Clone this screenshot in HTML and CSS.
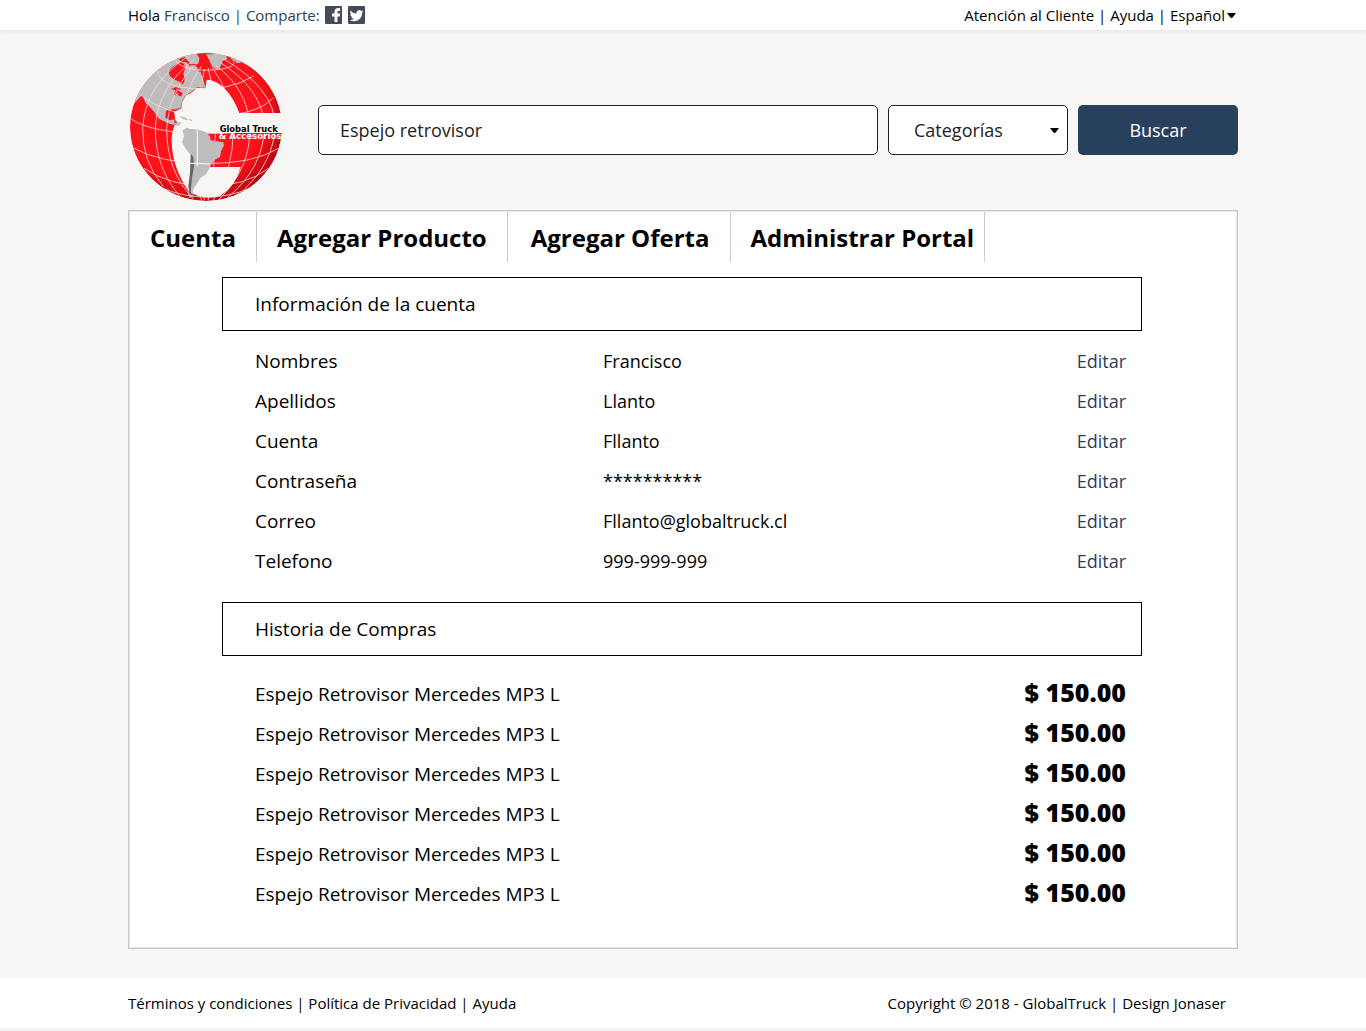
FILE: index.html
```html
<!DOCTYPE html>
<html lang="es">
<head>
<meta charset="utf-8">
<meta name="viewport" content="width=device-width, initial-scale=1">
<title>GlobalTruck - Cuenta</title>
<link rel="stylesheet" href="styles.css">
</head>
<body>
<div class="topbar">
  <div class="container topbar-inner">
    <div class="greeting">
      <span>Hola <a class="accent" href="#">Francisco</a> <span class="accent">| Comparte:</span></span>
      <a class="social" href="#" aria-label="Facebook">
        <svg viewBox="0 0 18 18" width="18" height="18"><rect width="17" height="18" rx="1" fill="#454b57"/><path fill="#fff" d="M9.500 16v-5.500H7v-3h2.500V6c0-2.600 1.400-4 3.800-4 .8 0 1.400.1 1.800.2v2.700h-1.300c-1.100 0-1.300.6-1.300 1.500v1.100h2.700l-.4 3h-2.300V16z"/></svg>
      </a>
      <a class="social" href="#" aria-label="Twitter">
        <svg viewBox="0 0 18 18" width="18" height="18"><rect width="17" height="18" rx="1" fill="#454b57"/><path fill="#fff" d="M15.500 5.200c-.5.200-1 .4-1.600.5.600-.4 1-.9 1.200-1.500-.5.300-1.100.5-1.800.7a2.900 2.900 0 0 0-4.900 2.600C6 7.400 4 6.300 2.600 4.500c-.8 1.400-.3 3 .9 3.800-.5 0-.9-.1-1.300-.4 0 1.400 1 2.500 2.300 2.800-.4.100-.9.100-1.300 0 .4 1.200 1.400 2 2.700 2-1.200 1-2.700 1.400-4.300 1.200 4.900 3 12.500.5 12.500-7.200.6-.4 1-.9 1.400-1.500z"/></svg>
      </a>
    </div>
    <div class="toplinks">
      <a href="#">Atención al Cliente</a> | <a href="#">Ayuda</a> | <button class="language" type="button">Español<svg viewBox="0 0 9 5" width="9" height="5"><path d="M0 0h9L6 4Q4.500 6 3 4z"/></svg></button>
    </div>
  </div>
</div>

<header class="container header">
  <a class="logo" href="#" aria-label="Global Truck &amp; Accesorios">
    <svg viewBox="24 15 468 462" width="156" height="154">
      <defs>
        <radialGradient id="shade" cx="42%" cy="40%" r="62%">
          <stop offset="0.750" stop-color="#fe131c"/><stop offset="1" stop-color="#b70710"/>
        </radialGradient>
        <clipPath id="ball"><ellipse cx="258" cy="246" rx="228" ry="222"/></clipPath>
      </defs>
      <g clip-path="url(#ball)">
        <ellipse cx="258" cy="246" rx="228" ry="222" fill="url(#shade)"/>
        <path fill="#bebcbd" d="M30 190L55 130 110 60 180 24 232 26 240 55 242 80 250 104 256 128 232 126 215 140 198 150 186 170 182 188 164 194 138 198 136 218 150 225 162 222 165 240 148 236 118 222 98 196 78 176 66 150z"/>
        <path fill="#fe131c" d="M166 60l16-8 10 4 4 14-6 16 4 16-2 12-6 4-8-8-14-6-14-10-4-12 6-12zM176 42l18-6 8 10 10 12 22-2-10-16 8-14 28 2-4 32-6 20-16 0-2-14-14-6-10 2-8-10-16-2z"/>
        <path fill="#fe131c" d="M154 132l14-6 16 6-12 4 16 8-4 10-8-2-4-10-6 10-4-2 4-14zM66 176l16 2 20 24 12 20-8-2-18-22zM140 196l24-4-2 30-12 4-12-10z"/>
        <path fill="#bebcbd" d="M204 34l26-8 8 14-2 14-12 4-12-8-10-4zM258 28l58-2 6 16-14 6-8 20-10 6-14-10-10-22zM334 38l20 4 10 12-14 0z"/>
        <g fill="none" stroke="#fbdcdc" stroke-width="3" opacity=".8">
          <path d="M164 42Q180 76 260 76Q334 74 342 56Q344 46 330 38"/>
          <path d="M112 78Q118 120 210 130Q330 140 402 92"/>
          <path d="M62 150Q135 208 250 214Q410 215 460 158"/>
          <path d="M34 222Q92 264 260 266Q420 266 482 222"/>
          <path d="M38 308Q120 354 260 356Q400 356 476 310"/>
          <path d="M72 370Q150 422 260 424Q376 424 446 370M130 430Q190 456 260 456Q330 456 388 430"/>
          <path d="M206 32Q74 120 68 250Q66 350 130 424"/>
          <path d="M222 44Q110 130 106 250Q106 370 180 454"/>
          <path d="M232 54Q150 130 140 250Q140 380 220 462"/>
          <path d="M244 64Q188 140 182 250Q182 370 246 466M254 72Q234 150 232 250V370Q240 430 254 466"/>
          <path d="M264 68Q284 140 286 250Q286 380 264 466"/>
          <path d="M276 66Q336 150 340 250Q340 380 280 466"/>
          <path d="M288 62Q380 130 390 240Q394 370 296 464"/>
          <path d="M300 52Q424 130 434 240Q432 370 320 460M308 40Q462 130 466 240Q462 350 370 436"/>
        </g>
      </g>
      <path fill="#f7f6f4" d="M490 204H358C338 148 302 106 260 104L256 130 232 128 216 142 198 152 186 172 184 190 172 196 162 200 166 226 176 236 164 240Q154 262 155 290C156 350 180 400 206 440Q256 468 300 452C330 436 350 406 362 366H240V264H490z"/>
      <path fill="#bebcbd" d="M188 256l12-8 12 4 26 2 20 8 12 12 2 12 38 6 2 10-8 14-4 20-16 8-12 18-14 26-18 12-8 14-10 14-4 12 4 8-8-2-6-14 4-30 4-50-2-20-16-20-12-20 6-18zM204 440l20 14-16 4z"/>
      <path fill="#64666a" d="M212 326l8 10 2 28-6 36-4 40 6 12-10-6-3-22 5-40z"/>
      <path fill="none" stroke="#fff" stroke-width="3" d="M232 256V364M184 354L270 357"/>
      <path fill="#bebcbd" d="M164 234l20-2-4 8-12 2zM176 212l22 6 6 8-14-3zM202 222l16 2-4 4zM232 98l22 24-8 6z"/>
      <text class="logo-name" x="299" y="261" font-size="25">Global Truck</text>
      <text class="logo-sub" x="296" y="281" font-size="26">&amp; Accesorios</text>
    </svg>
  </a>
  <form class="search">
    <input class="search-text" type="text" value="Espejo retrovisor" aria-label="Buscar producto">
    <div class="select-wrap">
      <select class="search-category" aria-label="Categorías"><option>Categorías</option></select>
      <svg class="select-arrow" viewBox="0 0 9 5" width="9" height="5"><path d="M0 0h9L6 4Q4.500 6 3 4z"/></svg>
    </div>
    <button class="search-button" type="button">Buscar</button>
  </form>
</header>

<main class="container panel">
  <nav class="tabs">
    <a href="#">Cuenta</a><a href="#">Agregar Producto</a><a class="tab-wide" href="#">Agregar Oferta</a><a class="tab-last" href="#">Administrar Portal</a>
  </nav>
  <section class="block">
    <h2>Información de la cuenta</h2>
    <table class="account">
      <tr><th scope="row">Nombres</th><td>Francisco</td><td class="end"><a href="#">Editar</a></td></tr>
      <tr><th scope="row">Apellidos</th><td>Llanto</td><td class="end"><a href="#">Editar</a></td></tr>
      <tr><th scope="row">Cuenta</th><td>Fllanto</td><td class="end"><a href="#">Editar</a></td></tr>
      <tr><th scope="row">Contraseña</th><td>**********</td><td class="end"><a href="#">Editar</a></td></tr>
      <tr><th scope="row">Correo</th><td>Fllanto@globaltruck.cl</td><td class="end"><a href="#">Editar</a></td></tr>
      <tr><th scope="row">Telefono</th><td>999-999-999</td><td class="end"><a href="#">Editar</a></td></tr>
    </table>
  </section>
  <section class="block">
    <h2>Historia de Compras</h2>
    <table class="history">
      <tr><th scope="row">Espejo Retrovisor Mercedes MP3 L</th><td class="end price">$ 150.00</td></tr>
      <tr><th scope="row">Espejo Retrovisor Mercedes MP3 L</th><td class="end price">$ 150.00</td></tr>
      <tr><th scope="row">Espejo Retrovisor Mercedes MP3 L</th><td class="end price">$ 150.00</td></tr>
      <tr><th scope="row">Espejo Retrovisor Mercedes MP3 L</th><td class="end price">$ 150.00</td></tr>
      <tr><th scope="row">Espejo Retrovisor Mercedes MP3 L</th><td class="end price">$ 150.00</td></tr>
      <tr><th scope="row">Espejo Retrovisor Mercedes MP3 L</th><td class="end price">$ 150.00</td></tr>
    </table>
  </section>
</main>

<footer class="footer">
  <div class="container footer-inner">
    <div><a href="#">Términos y condiciones</a> | <a href="#">Política de Privacidad</a> | <a href="#">Ayuda</a></div>
    <div class="copyright">Copyright © 2018 - GlobalTruck | Design Jonaser</div>
  </div>
</footer>
</body>
</html>
```
FILE: styles.css
```css
* { box-sizing: border-box; }
body {
  margin: 0;
  background: #f7f6f4;
  color: #000;
  font: 400 15px/20px "Open Sans", "Noto Sans", sans-serif;
}
a { color: inherit; text-decoration: none; }
button, input, select { font: inherit; color: inherit; }
svg { display: block; }
.container { max-width: 1110px; margin: 0 auto; }

.topbar { background: #fff; box-shadow: 0 1px 4px rgba(0, 0, 0, .08); }
.topbar-inner {
  display: flex;
  justify-content: space-between;
  align-items: center;
  height: 30px;
}
.greeting { display: flex; align-items: center; gap: 5px; }
.toplinks { padding-right: 2px; }
.accent { color: #27405b; }
.language {
  display: inline-flex;
  align-items: center;
  gap: 2px;
  margin: 0;
  padding: 0;
  border: 0;
  background: none;
}

.header {
  display: flex;
  gap: 34px;
  padding: 20px 0 6px;
}
.logo-name, .logo-sub { font-family: "DejaVu Sans", sans-serif; font-weight: 700; }
.logo-sub { fill: #fff; }
.search {
  display: flex;
  flex: 1;
  align-items: flex-start;
  gap: 10px;
  padding-top: 55px;
  font-size: 18px;
}
.search-text, .search-category {
  height: 50px;
  border: 1px solid #1f1f29;
  border-radius: 5px;
  background: #fff;
  color: #222;
}
.search-text { flex: 1; min-width: 0; padding: 0 21px; }
.select-wrap { position: relative; width: 180px; }
.search-category { width: 100%; padding: 0 25px; appearance: none; line-height: 26px; }
.select-arrow { position: absolute; right: 9px; top: 23px; pointer-events: none; }
.search-button {
  width: 160px;
  height: 50px;
  border: 0;
  border-radius: 5px;
  background: #27405b;
  color: #fff;
}

.panel {
  padding: 0 2px 34px 0;
  border: 1px solid #c8c8c8;
  box-shadow: inset 0 0 0 1px #e6e6e6;
  background: #fff;
}
.tabs { display: flex; padding: 1px 0 0 1px; }
.tabs a {
  padding: 8px 20px 6px;
  border-right: 1px solid #ccc;
  font-size: 24px;
  line-height: 36px;
  font-weight: 700;
}
.tabs .tab-wide { padding-left: 23px; }
.tabs .tab-last { padding-right: 10px; }

.block { max-width: 920px; margin: 15px auto 0; }
.block + .block { margin-top: 21px; }
h2 {
  margin: 0;
  padding: 0 32px;
  border: 1px solid #000;
  font-size: 19px;
  line-height: 52px;
  font-weight: 400;
}
table { width: 100%; border-collapse: collapse; font-size: 18px; table-layout: fixed; }
.account { margin-top: 10px; }
.history { margin-top: 18px; }
tr { height: 40px; }
th { padding: 0 0 0 33px; text-align: left; font-size: 19px; font-weight: 400; }
.account th { width: 381px; }
.history th { width: 60%; }
td { padding: 0; }
.end { padding-right: 16px; text-align: right; }
.end a { color: #27405b; }
.price { padding-bottom: 4px; font-size: 25px; font-weight: 800; }

.footer { margin-top: 29px; background: #fff; border-bottom: 3px solid #f5f5f5; }
.footer-inner {
  display: flex;
  justify-content: space-between;
  align-items: center;
  height: 50px;
}
.copyright { padding-right: 12px; }
```
